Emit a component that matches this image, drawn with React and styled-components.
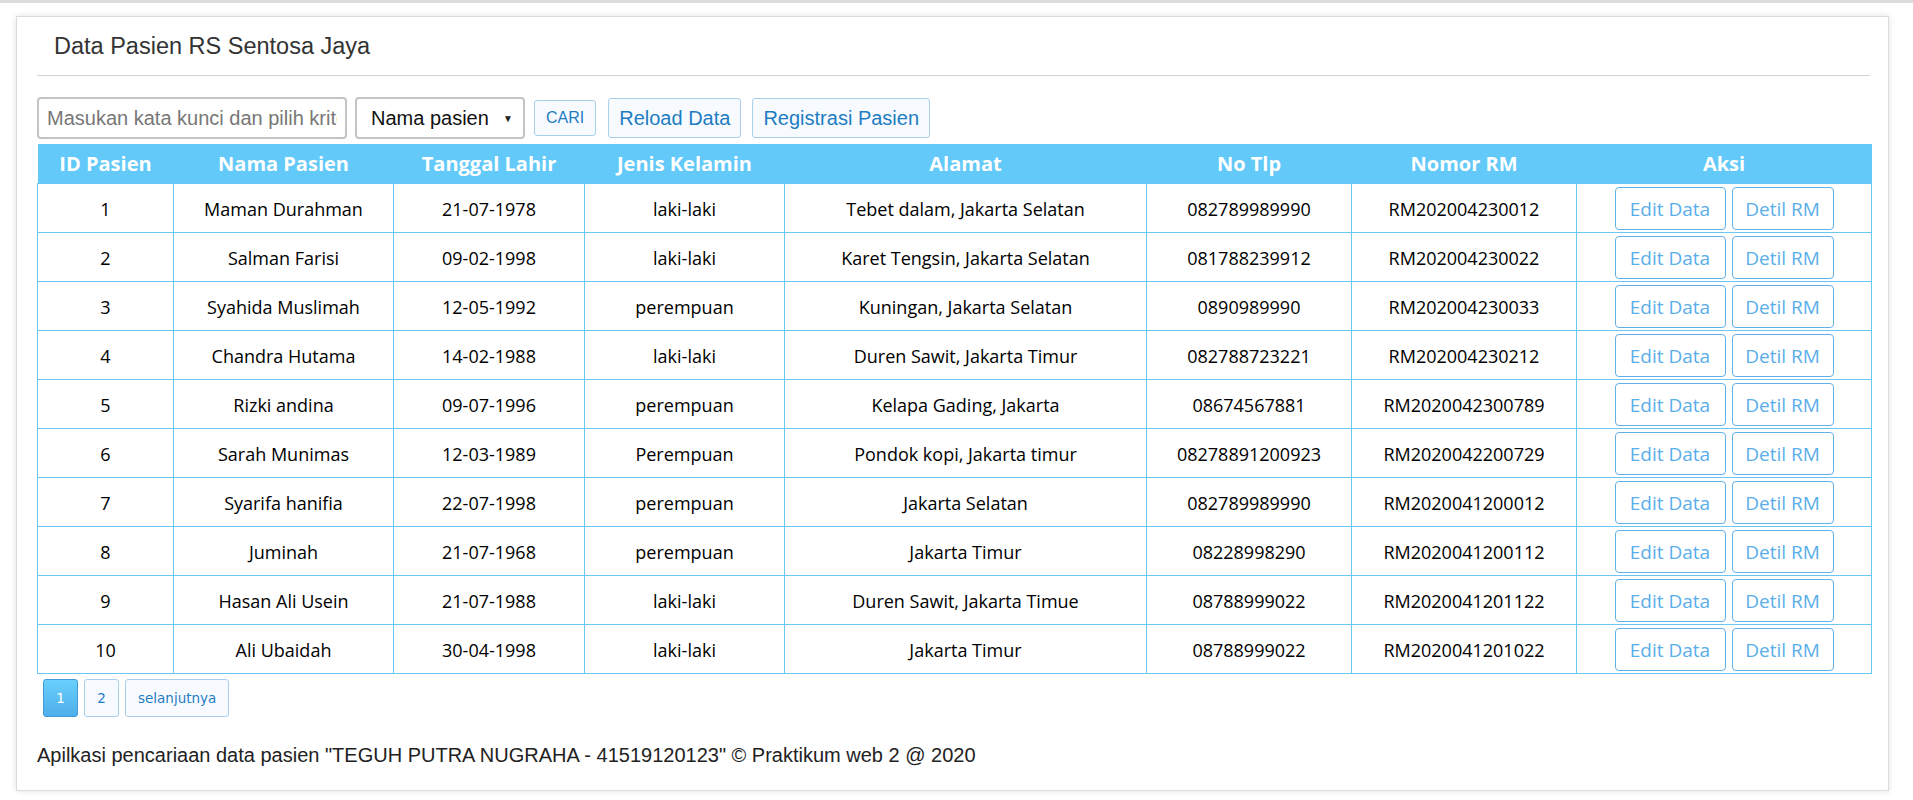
import React from "react";
import styled, { createGlobalStyle } from "styled-components";

const GlobalStyle = createGlobalStyle`
  html, body {
    margin: 0;
    padding: 0;
    background: #ffffff;
  }
  body {
    border-top: 3px solid #dcdcdc;
    font-family: "Liberation Sans", Arial, sans-serif;
  }
`;

const Card = styled.div`
  margin: 13px 24px 10px 16px;
  padding: 0 18px 0 20px;
  border: 1px solid #dcdcdc;
  box-shadow: 0 0 6px rgba(0, 0, 0, 0.12);
  background: #fff;
  height: 775px;
  box-sizing: border-box;
`;

const Title = styled.h2`
  margin: 0;
  padding: 15px 0 0 17px;
  line-height: 28px;
  font-weight: 400;
  font-size: 23.5px;
  color: #333;
`;

const Rule = styled.hr`
  margin: 15px 0 21px;
  border: 0;
  border-top: 1px solid #d4d4d4;
`;

const Toolbar = styled.div`
  display: flex;
  align-items: center;
  height: 42px;
  gap: 8px;
`;

const SearchInput = styled.input`
  box-sizing: border-box;
  width: 310px;
  height: 42px;
  border: 2px solid #c4c4c4;
  border-radius: 4px;
  padding: 0 8px;
  font-family: "Liberation Sans", Arial, sans-serif;
  font-size: 20px;
  color: #333;
  &::placeholder {
    color: #777;
  }
`;

const Select = styled.div`
  box-sizing: border-box;
  width: 170px;
  height: 42px;
  border: 2px solid #c4c4c4;
  border-radius: 4px;
  display: flex;
  align-items: center;
  justify-content: space-between;
  padding: 0 10px 0 14px;
  font-size: 20px;
  color: #111;
`;

const Arrow = styled.span`
  font-size: 10px;
  color: #222;
`;

const ToolButton = styled.button`
  box-sizing: border-box;
  height: ${(p) => (p.small ? "36px" : "40px")};
  padding: 0 ${(p) => (p.small ? "11px" : "10px")};
  margin-left: ${(p) => p.ml || "0"};
  background: #f7fbff;
  border: 1px solid #a9cfea;
  border-radius: 3px;
  color: #1f7cc2;
  font-family: "Liberation Sans", Arial, sans-serif;
  font-size: ${(p) => (p.small ? "16px" : "20px")};
`;

const Table = styled.table`
  margin-top: 5px;
  width: 1834px;
  border-collapse: collapse;
  table-layout: fixed;
  font-family: "Open Sans", "Lato", sans-serif;
`;

const HeadCell = styled.th`
  height: 39px;
  padding: 0;
  background: #63c9f9;
  color: #fff;
  font-size: 20px;
  font-weight: 700;
  text-align: center;
`;

const Cell = styled.td`
  padding: 3px 3px 2px;
  border: 1px solid #6cc6f2;
  text-align: center;
  font-size: 18px;
  color: #000;
`;

const Actions = styled.div`
  display: flex;
  justify-content: center;
  gap: 6px;
`;

const ActionButton = styled.button`
  box-sizing: border-box;
  height: 43px;
  width: ${(p) => p.w}px;
  padding: 0;
  background: #fff;
  border: 1px solid #62b0e8;
  border-radius: 4px;
  color: #5aaeea;
  font-family: "Open Sans", "Lato", sans-serif;
  font-size: 19px;
`;

const Pager = styled.div`
  display: flex;
  gap: 6px;
  margin: 5px 0 0 6px;
`;

const PageButton = styled.span`
  box-sizing: border-box;
  height: 38px;
  min-width: 35px;
  padding: 0 12px;
  display: flex;
  align-items: center;
  justify-content: center;
  border-radius: 3px;
  font-family: "DejaVu Sans", Verdana, sans-serif;
  font-size: 13.5px;
  border: 1px solid ${(p) => (p.active ? "#3f9cd8" : "#a9cfea")};
  color: ${(p) => (p.active ? "#fff" : "#1f7cc2")};
  background: ${(p) =>
    p.active ? "linear-gradient(#69d0fc, #4eaeea)" : "#f7fbff"};
`;

const Footer = styled.p`
  margin: 27px 0 0;
  font-size: 20px;
  line-height: 23px;
  color: #222;
`;

const columns = [136, 220, 191, 200, 362, 205, 225, 295];
const headers = [
  "ID Pasien",
  "Nama Pasien",
  "Tanggal Lahir",
  "Jenis Kelamin",
  "Alamat",
  "No Tlp",
  "Nomor RM",
  "Aksi",
];

const patients = [
  ["1", "Maman Durahman", "21-07-1978", "laki-laki", "Tebet dalam, Jakarta Selatan", "082789989990", "RM202004230012"],
  ["2", "Salman Farisi", "09-02-1998", "laki-laki", "Karet Tengsin, Jakarta Selatan", "081788239912", "RM202004230022"],
  ["3", "Syahida Muslimah", "12-05-1992", "perempuan", "Kuningan, Jakarta Selatan", "0890989990", "RM202004230033"],
  ["4", "Chandra Hutama", "14-02-1988", "laki-laki", "Duren Sawit, Jakarta Timur", "082788723221", "RM202004230212"],
  ["5", "Rizki andina", "09-07-1996", "perempuan", "Kelapa Gading, Jakarta", "08674567881", "RM2020042300789"],
  ["6", "Sarah Munimas", "12-03-1989", "Perempuan", "Pondok kopi, Jakarta timur", "08278891200923", "RM2020042200729"],
  ["7", "Syarifa hanifia", "22-07-1998", "perempuan", "Jakarta Selatan", "082789989990", "RM2020041200012"],
  ["8", "Juminah", "21-07-1968", "perempuan", "Jakarta Timur", "08228998290", "RM2020041200112"],
  ["9", "Hasan Ali Usein", "21-07-1988", "laki-laki", "Duren Sawit, Jakarta Timue", "08788999022", "RM2020041201122"],
  ["10", "Ali Ubaidah", "30-04-1998", "laki-laki", "Jakarta Timur", "08788999022", "RM2020041201022"],
];

const App = () => {
  return (
    <>
      <GlobalStyle />
      <Card>
        <Title>Data Pasien RS Sentosa Jaya</Title>
        <Rule />
        <Toolbar>
          <SearchInput placeholder="Masukan kata kunci dan pilih kriteria" />
          <Select>
            Nama pasien <Arrow>▼</Arrow>
          </Select>
          <ToolButton small ml="1px">CARI</ToolButton>
          <ToolButton ml="4px">Reload Data</ToolButton>
          <ToolButton ml="3px">Registrasi Pasien</ToolButton>
        </Toolbar>
        <Table>
          <colgroup>
            {columns.map((w, i) => (
              <col key={i} style={{ width: w }} />
            ))}
          </colgroup>
          <thead>
            <tr>
              {headers.map((h) => (
                <HeadCell key={h}>{h}</HeadCell>
              ))}
            </tr>
          </thead>
          <tbody>
            {patients.map((row) => (
              <tr key={row[0]}>
                {row.map((v, i) => (
                  <Cell key={i}>{v}</Cell>
                ))}
                <Cell>
                  <Actions>
                    <ActionButton w={111}>Edit Data</ActionButton>
                    <ActionButton w={102}>Detil RM</ActionButton>
                  </Actions>
                </Cell>
              </tr>
            ))}
          </tbody>
        </Table>
        <Pager>
          <PageButton active>1</PageButton>
          <PageButton>2</PageButton>
          <PageButton>selanjutnya</PageButton>
        </Pager>
        <Footer>
          Apilkasi pencariaan data pasien "TEGUH PUTRA NUGRAHA - 41519120123" © Praktikum web 2 @ 2020
        </Footer>
      </Card>
    </>
  );
};

export default App;
